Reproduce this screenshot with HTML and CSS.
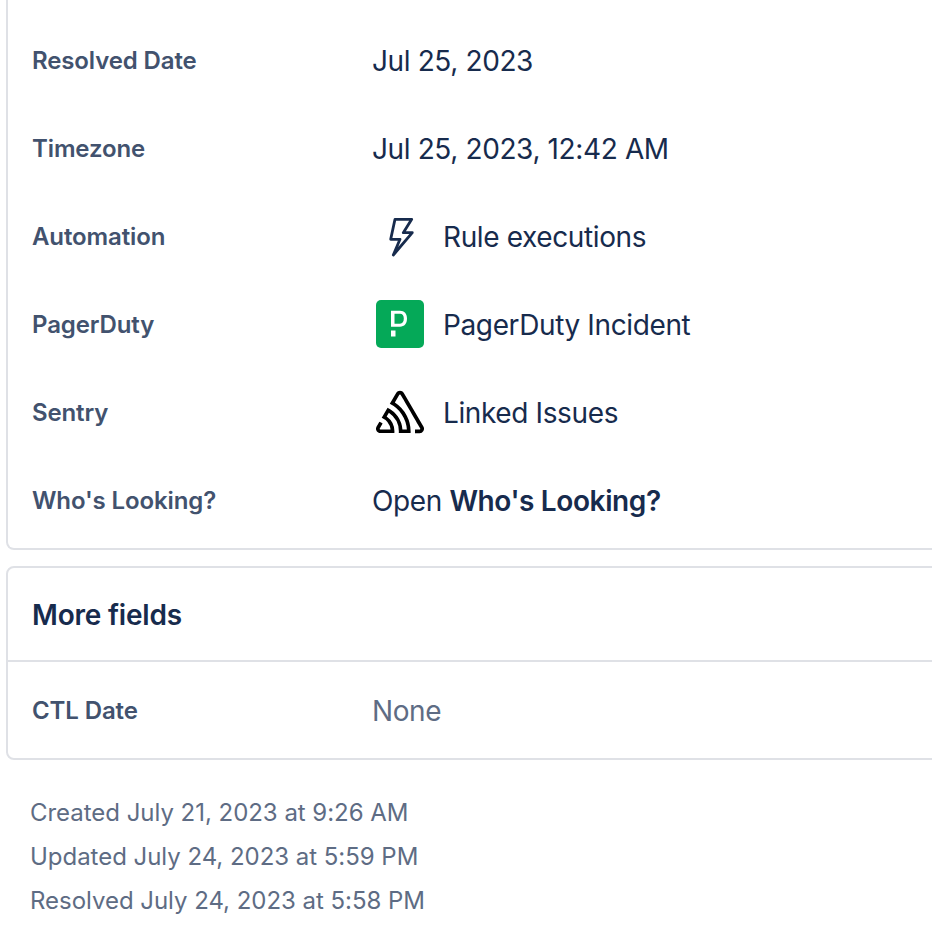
FILE: index.html
```html
<!DOCTYPE html>
<html lang="en">
<head>
<meta charset="utf-8">
<title>Issue details</title>
<link rel="stylesheet" href="styles.css">
</head>
<body>
<main class="panel">
  <section class="card card-top">
    <div class="row"><div class="label">Resolved Date</div><div class="value"><span class="text">Jul 25, 2023</span></div></div>
    <div class="row"><div class="label">Timezone</div><div class="value"><span class="text">Jul 25, 2023, 12:42 AM</span></div></div>
    <div class="row"><div class="label">Automation</div><div class="value">
      <svg class="icon" viewBox="0 0 48 48" aria-hidden="true"><path d="M19 7.300H35.700L27.300 20.700H36.300L17.300 43 24 27.300H14.700Z" fill="none" stroke="#172b4d" stroke-width="2.800" stroke-linejoin="round"/></svg>
      <span class="text">Rule executions</span></div></div>
    <div class="row"><div class="label">PagerDuty</div><div class="value">
      <svg class="icon" viewBox="0 0 48 48" aria-hidden="true"><rect width="48" height="48" rx="5" fill="#05a958"/><path d="M15 36.500V30.500H19.500V36.500ZM15 26.700V10.700H24C28.500 10.700 31 13.500 31 18.500 31 23.500 28.500 26.700 24 26.700ZM18.500 23.700H24C26.500 23.700 27.800 21.800 27.800 18.600 27.800 15.500 26.500 13.700 24 13.700H18.500Z" fill="#fff" fill-rule="evenodd"/></svg>
      <span class="text">PagerDuty Incident</span></div></div>
    <div class="row"><div class="label">Sentry</div><div class="value">
      <svg class="icon" viewBox="0 0 24 24" aria-hidden="true"><path d="M13.91 2.505c-.873-1.448-2.972-1.448-3.844 0L6.904 7.92a15.478 15.478 0 0 1 8.53 12.811h-2.221A13.301 13.301 0 0 0 5.784 9.814l-2.926 5.06a7.65 7.65 0 0 1 4.435 5.848H2.194a.365.365 0 0 1-.298-.534l1.413-2.402a5.16 5.16 0 0 0-1.614-.913L.296 19.275a2.182 2.182 0 0 0 .812 2.999 2.24 2.24 0 0 0 1.086.288h6.983a9.322 9.322 0 0 0-3.845-8.318l1.11-1.922a11.47 11.47 0 0 1 4.95 10.24h5.915a17.242 17.242 0 0 0-7.885-15.28l2.244-3.845a.37.37 0 0 1 .504-.13c.255.14 9.75 16.708 9.928 16.9a.365.365 0 0 1-.327.543h-2.287c.029.612.029 1.223 0 1.831h2.297a2.206 2.206 0 0 0 1.922-3.31z" fill="#000"/></svg>
      <span class="text">Linked Issues</span></div></div>
    <div class="row"><div class="label">Who's Looking?</div><div class="value"><span class="text">Open <strong>Who's Looking?</strong></span></div></div>
  </section>
  <section class="card card-more">
    <h2 class="card-title">More fields</h2>
    <div class="row row-single"><div class="label">CTL Date</div><div class="value value-muted"><span class="text">None</span></div></div>
  </section>
  <footer class="dates">
    <p>Created July 21, 2023 at 9:26 AM</p>
    <p>Updated July 24, 2023 at 5:59 PM</p>
    <p>Resolved July 24, 2023 at 5:58 PM</p>
  </footer>
</main>
</body>
</html>
```
FILE: styles.css
```css
html, body {
  margin: 0;
  padding: 0;
  height: 946px;
  overflow: hidden;
  background: #fff;
  font-family: Inter, "Liberation Sans", sans-serif;
  color: #172b4d;
}
.panel {
  width: 1000px;
  padding-left: 6px;
  box-sizing: border-box;
}
.card {
  border: 2px solid #dfe1e6;
  border-radius: 8px;
  box-sizing: border-box;
}
.card-top {
  border-top: 0;
  border-top-left-radius: 0;
  border-top-right-radius: 0;
  padding: 16px 0 4px;
}
.card-more {
  margin-top: 16px;
}
.card-title {
  margin: 0;
  height: 92px;
  line-height: 94px;
  padding-left: 24px;
  font-size: 28px;
  font-weight: 600;
  letter-spacing: -0.2px;
  color: #172b4d;
  border-bottom: 2px solid #dfe1e6;
  box-sizing: content-box;
}
.row {
  display: flex;
  align-items: center;
  height: 88px;
  padding-left: 24px;
}
.row-single {
  height: 96px;
}
.label {
  width: 340px;
  font-size: 24px;
  font-weight: 600;
  letter-spacing: -0.12px;
  color: #42526e;
}
.value {
  display: flex;
  align-items: center;
  gap: 19px;
  font-size: 28px;
  font-weight: 400;
  letter-spacing: -0.38px;
}
.text {
  padding-top: 2px;
}
.value strong {
  font-weight: 600;
}
.value-muted {
  color: #5e6c84;
}
.icon {
  width: 48px;
  height: 48px;
  margin-left: 4px;
  flex: none;
}
.dates {
  margin-top: 31px;
  padding-left: 24px;
  color: #5e6c84;
  font-size: 24px;
  line-height: 44px;
  letter-spacing: -0.03px;
}
.dates p {
  margin: 0;
}
```
